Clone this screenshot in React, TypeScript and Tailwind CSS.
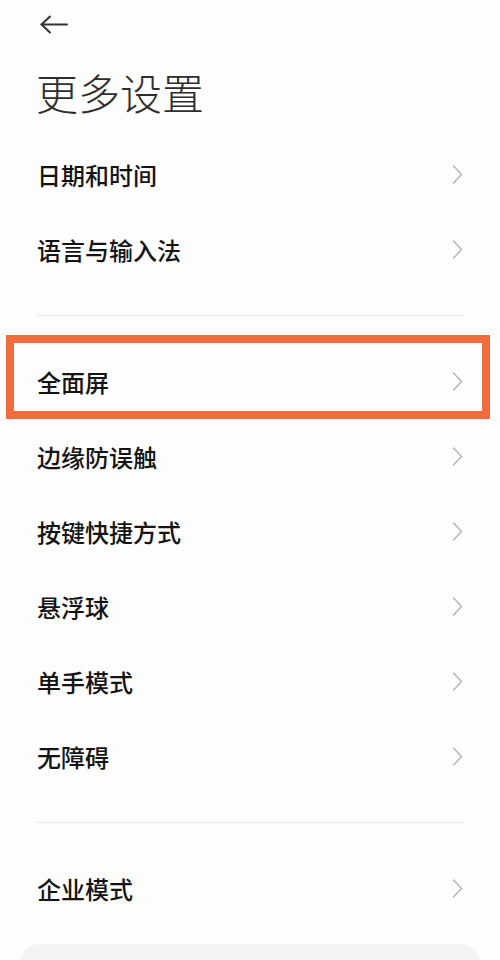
import React from "react";

const font = { fontFamily: '"Noto Sans CJK SC", "Noto Sans", sans-serif' };

function Chevron() {
  return (
    <svg width="11" height="19" viewBox="0 0 11 19" fill="none">
      <polyline points="1.5,1 9.5,9.5 1.5,18" stroke="#b3b3b3" strokeWidth="1.4" strokeLinecap="round" strokeLinejoin="round" />
    </svg>
  );
}

function Row({ label, highlight }: { label: string; highlight?: boolean }) {
  return (
    <div className="relative h-[75px] flex items-center justify-between pl-[37px] pr-[37px]">
      <span className="text-[24px] leading-none font-medium text-[#141414]">{label}</span>
      <Chevron />
      {highlight && (
        <span className="absolute left-[6px] right-[10px] top-[-9px] bottom-0 border-[8px] border-[#f36c3e]" />
      )}
    </div>
  );
}

function Divider() {
  return (
    <div className="h-[57px] flex items-center px-[37px]">
      <div className="h-px w-full bg-[#e4e4e4]" />
    </div>
  );
}

export default function App() {
  return (
    <div className="w-[500px] h-[960px] overflow-hidden bg-[#fdfdfd]" style={font}>
      <div className="h-[48px] flex items-center pl-[40px]">
        <svg width="28" height="19" viewBox="0 0 28 19" fill="none">
          <line x1="1.5" y1="9.5" x2="27" y2="9.5" stroke="#333" strokeWidth="2" strokeLinecap="round" />
          <polyline points="10,1.5 1.5,9.5 10,17.5" stroke="#333" strokeWidth="2" strokeLinecap="round" strokeLinejoin="round" />
        </svg>
      </div>
      <div className="h-[89px] pt-[23px] pl-[36px]">
        <span className="text-[42px] leading-none font-light text-[#2e2e2e]">更多设置</span>
      </div>
      <Row label="日期和时间" />
      <Row label="语言与输入法" />
      <Divider />
      <Row label="全面屏" highlight />
      <Row label="边缘防误触" />
      <Row label="按键快捷方式" />
      <Row label="悬浮球" />
      <Row label="单手模式" />
      <Row label="无障碍" />
      <Divider />
      <Row label="企业模式" />
      <div className="mt-[18px] mx-[20px] h-[60px] rounded-[20px] bg-[#f3f3f3]" />
    </div>
  );
}
